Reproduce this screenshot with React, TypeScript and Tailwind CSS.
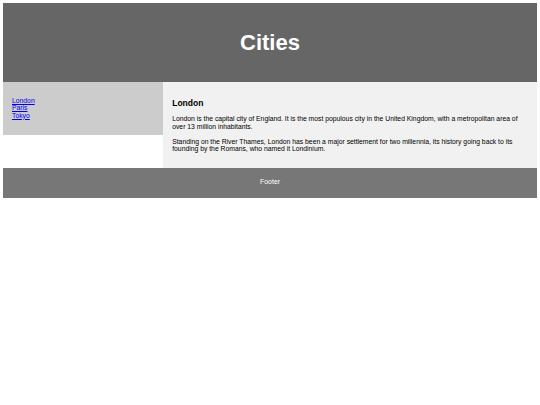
export default function App() {
  return (
    <div className="p-[3px] font-['Liberation_Sans',Arial,sans-serif] text-black">
      {/* Page header */}
      <header className="flex h-[79px] items-center justify-center bg-[#666] text-white">
        <h2 className="text-[22px] font-bold leading-[25px]">Cities</h2>
      </header>

      <section className="flex items-start">
        <nav className="w-[30%] bg-[#ccc] pt-[15px] pb-[16px] pl-[9px]">
          <ul className="text-[6.8px] leading-[7.3px]">
            {['London', 'Paris', 'Tokyo'].map((city) => (
              <li key={city}>
                <a href="#" className="text-[#0000ee] underline">
                  {city}
                </a>
              </li>
            ))}
          </ul>
        </nav>

        <article className="flex-1 self-stretch bg-[#f1f1f1] pt-[17px] pb-[15px] pl-[9px] pr-[9px]">
          <h1 className="text-[8.5px] font-bold leading-[9px]">London</h1>
          <p className="mt-[7.4px] text-[6.8px] leading-[7.3px]">
            London is the capital city of England. It is the most populous city in the United Kingdom, with a
            metropolitan area of over 13 million inhabitants.
          </p>
          <p className="mt-[8px] text-[6.8px] leading-[7.3px]">
            Standing on the River Thames, London has been a major settlement for two millennia, its history going
            back to its founding by the Romans, who named it Londinium.
          </p>
        </article>
      </section>

      <footer className="flex h-[30px] items-center justify-center bg-[#777] text-[7px] text-white">
        <p>Footer</p>
      </footer>
    </div>
  )
}
